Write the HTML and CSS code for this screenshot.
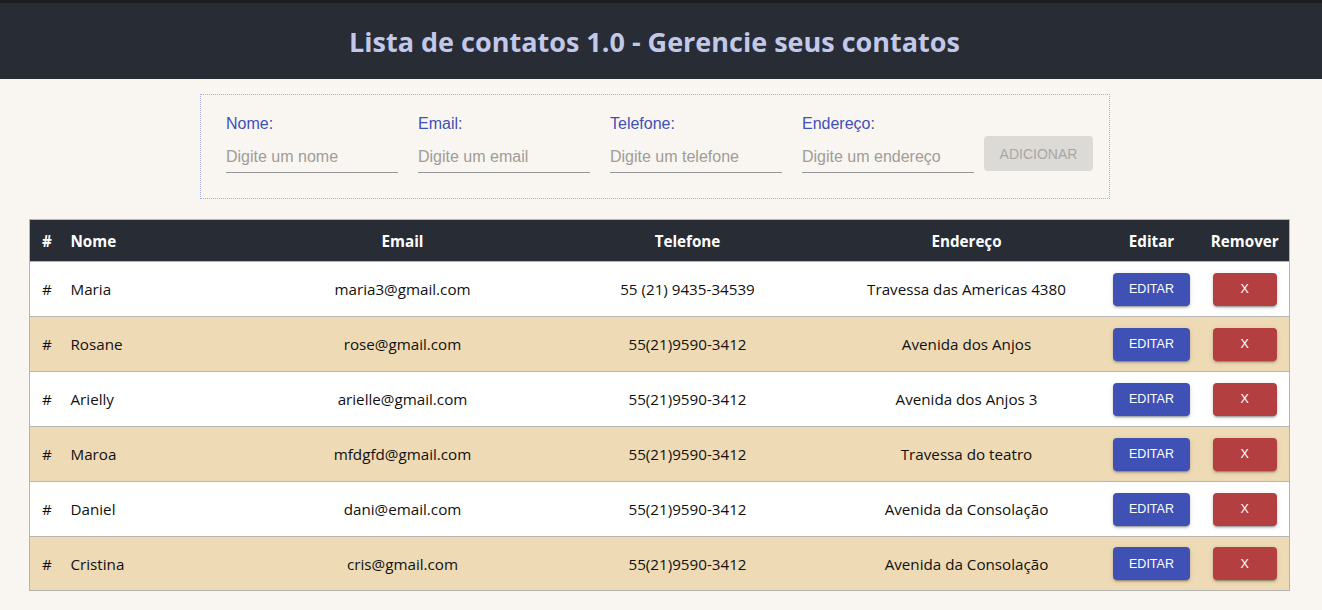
FILE: index.html
```html
<!DOCTYPE html>
<html lang="pt-BR">
<head>
<meta charset="utf-8">
<title>Lista de contatos</title>
<link rel="stylesheet" href="styles.css">
</head>
<body>
<header class="topbar">
  <h1 class="title">Lista de contatos 1.0 - Gerencie seus contatos</h1>
</header>
<main class="content">
  <form class="add-form">
    <label class="field">
      <span class="field-label">Nome:</span>
      <input class="field-input" type="text" placeholder="Digite um nome">
    </label>
    <label class="field">
      <span class="field-label">Email:</span>
      <input class="field-input" type="text" placeholder="Digite um email">
    </label>
    <label class="field">
      <span class="field-label">Telefone:</span>
      <input class="field-input" type="text" placeholder="Digite um telefone">
    </label>
    <label class="field">
      <span class="field-label">Endereço:</span>
      <input class="field-input" type="text" placeholder="Digite um endereço">
    </label>
    <button class="btn-add" type="button" disabled>ADICIONAR</button>
  </form>

  <table class="contacts">
    <colgroup>
      <col class="c-num"><col class="c-name"><col class="c-email"><col class="c-phone"><col class="c-addr"><col class="c-edit"><col class="c-del">
    </colgroup>
    <thead>
      <tr>
        <th class="left">#</th><th class="left">Nome</th><th>Email</th><th>Telefone</th><th>Endereço</th><th>Editar</th><th>Remover</th>
      </tr>
    </thead>
    <tbody>
      <tr>
        <td class="left">#</td><td class="left">Maria</td><td>maria3@gmail.com</td><td>55 (21) 9435-34539</td><td>Travessa das Americas 4380</td>
        <td><button class="btn btn-edit" type="button">EDITAR</button></td><td><button class="btn btn-del" type="button">X</button></td>
      </tr>
      <tr>
        <td class="left">#</td><td class="left">Rosane</td><td>rose@gmail.com</td><td>55(21)9590-3412</td><td>Avenida dos Anjos</td>
        <td><button class="btn btn-edit" type="button">EDITAR</button></td><td><button class="btn btn-del" type="button">X</button></td>
      </tr>
      <tr>
        <td class="left">#</td><td class="left">Arielly</td><td>arielle@gmail.com</td><td>55(21)9590-3412</td><td>Avenida dos Anjos 3</td>
        <td><button class="btn btn-edit" type="button">EDITAR</button></td><td><button class="btn btn-del" type="button">X</button></td>
      </tr>
      <tr>
        <td class="left">#</td><td class="left">Maroa</td><td>mfdgfd@gmail.com</td><td>55(21)9590-3412</td><td>Travessa do teatro</td>
        <td><button class="btn btn-edit" type="button">EDITAR</button></td><td><button class="btn btn-del" type="button">X</button></td>
      </tr>
      <tr>
        <td class="left">#</td><td class="left">Daniel</td><td>dani@email.com</td><td>55(21)9590-3412</td><td>Avenida da Consolação</td>
        <td><button class="btn btn-edit" type="button">EDITAR</button></td><td><button class="btn btn-del" type="button">X</button></td>
      </tr>
      <tr>
        <td class="left">#</td><td class="left">Cristina</td><td>cris@gmail.com</td><td>55(21)9590-3412</td><td>Avenida da Consolação</td>
        <td><button class="btn btn-edit" type="button">EDITAR</button></td><td><button class="btn btn-del" type="button">X</button></td>
      </tr>
    </tbody>
  </table>
</main>
</body>
</html>
```

FILE: styles.css
```css
* { box-sizing: border-box; }

html, body {
  margin: 0;
  padding: 0;
}

body {
  background: #f9f6f1;
  font-family: "Open Sans", "Noto Sans", sans-serif;
  color: #111;
  height: 610px;
  overflow: hidden;
}

.topbar {
  background: #282c34;
  border-top: 3px solid #1c1d20;
  height: 79px;
  display: flex;
  align-items: center;
  justify-content: center;
  padding-right: 13px;
}

.title {
  margin: 0;
  font-family: "Open Sans", sans-serif;
  font-weight: 700;
  font-size: 27px;
  color: #c2c8ea;
}

.content {
  padding-top: 15px;
}

.add-form {
  margin-left: 200px;
  width: 910px;
  height: 105px;
  border: 1px dotted #a7aee6;
  display: flex;
  align-items: flex-start;
  padding: 20px 15px 0 25px;
  gap: 20px;
  font-family: "Liberation Sans", Arial, sans-serif;
}

.field {
  display: flex;
  flex-direction: column;
  width: 172px;
}

.field-label {
  color: #3f51b5;
  font-size: 16px;
  line-height: 18px;
  margin-bottom: 8px;
}

.field-input {
  border: none;
  border-bottom: 1px solid #949494;
  background: transparent;
  font-family: "Liberation Sans", Arial, sans-serif;
  font-size: 16px;
  height: 32px;
  padding: 7px 0 6px;
  color: #222;
  outline: none;
}

.field-input::placeholder {
  color: #a09c98;
  opacity: 1;
}

.btn-add {
  margin-left: -10px;
  margin-top: 21px;
  width: 109px;
  height: 35px;
  border: none;
  border-radius: 4px;
  background: #dcdad6;
  color: #a9a7a4;
  font-family: "Liberation Sans", Arial, sans-serif;
  font-size: 14px;
  padding: 0;
}

.contacts {
  margin-top: 20px;
  margin-left: 29px;
  width: 1260px;
  border-collapse: collapse;
  table-layout: fixed;
  border: 1px solid #b4b4b4;
  font-size: 15.2px;
}

.c-num { width: 29px; }
.c-name { width: 202px; }
.c-email { width: 284px; }
.c-phone { width: 286px; }
.c-addr { width: 272px; }
.c-edit { width: 98px; }
.c-del { width: 89px; }

.contacts th {
  background: #282c34;
  color: #ffffff;
  font-weight: 700;
  height: 42px;
  text-align: center;
  padding: 0;
  white-space: nowrap;
}

.contacts td {
  height: 55px;
  text-align: center;
  padding: 0;
  border-top: 1px solid #b4b4b4;
  white-space: nowrap;
}

.contacts tbody tr:last-child td {
  height: 54px;
}

.contacts .left {
  text-align: left;
  padding-left: 12px;
}

.contacts tbody tr:nth-child(odd) { background: #ffffff; }
.contacts tbody tr:nth-child(even) { background: #eedab5; }

.btn {
  border: none;
  border-radius: 4px;
  height: 33px;
  color: #ffffff;
  font-family: "Liberation Sans", Arial, sans-serif;
  font-size: 12.5px;
  padding: 0;
  box-shadow: 0 3px 1px -2px rgba(0,0,0,0.2), 0 2px 2px 0 rgba(0,0,0,0.14), 0 1px 5px 0 rgba(0,0,0,0.12);
}

.btn-edit {
  width: 77px;
  background: #3f51b5;
}

.btn-del {
  width: 64px;
  background: #b33f40;
}
```
